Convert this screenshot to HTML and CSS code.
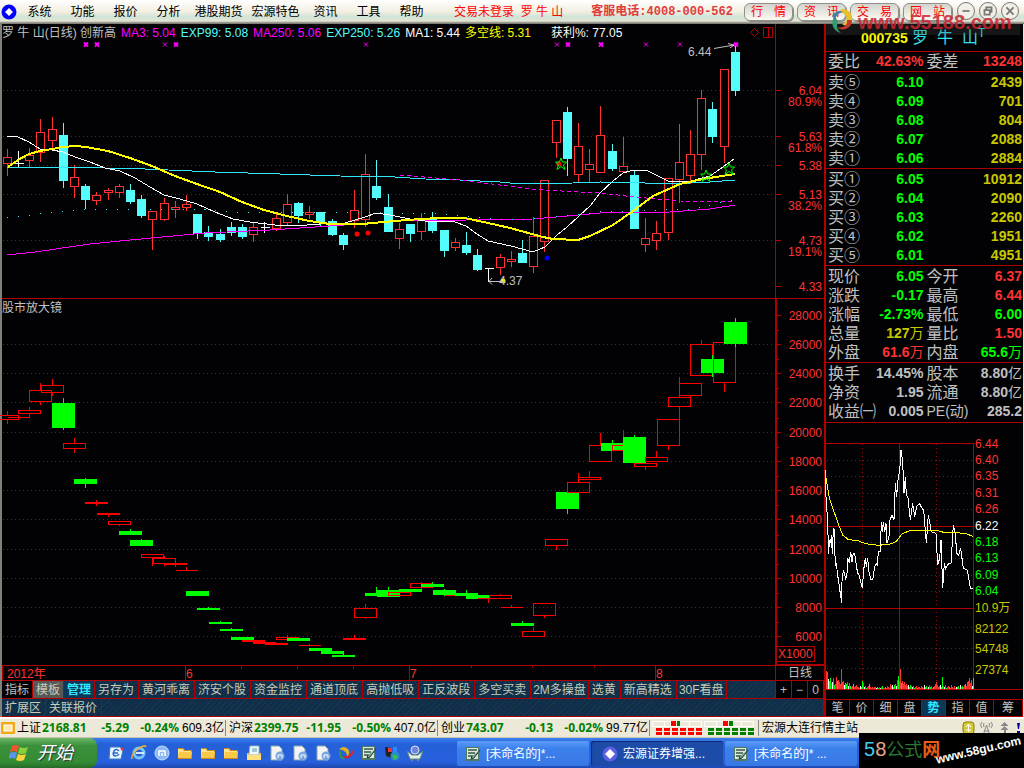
FILE: index.html
```html
<!DOCTYPE html>
<html lang="zh-CN">
<head>
  <meta charset="UTF-8" />
  <meta name="viewport" content="width=device-width, initial-scale=1.0" />
  <title>罗牛山 000735 日线</title>
  <link rel="stylesheet" href="styles.css">
</head>
<body>

  <!-- Icons -->
  <svg class="defs" aria-hidden="true">
    <symbol id="folder" viewBox="0 0 16 16">
      <path d="M1 3h5l2 2h7v9H1z" fill="#c98a1a"/><path d="M1 4h5l1 2h7v7H1z" fill="#ffe58a"/><path d="M2 7h13l-1 6H1z" fill="#fbc94a"/>
    </symbol>
    <symbol id="doc" viewBox="0 0 16 16">
      <path d="M2 1h8l3 3v11H2z" fill="#f4f4f4" stroke="#8aa"/><circle cx="11" cy="11" r="4.5" fill="#7aa6e0"/><path d="M9 13v-3h4v3" stroke="#fff" fill="none"/>
    </symbol>
    <symbol id="notes" viewBox="0 0 16 16">
      <path d="M1 1h13v14H1z" fill="#4f7a66"/><path d="M2 2h11v11H2z" fill="#dfe9d8"/><path d="M3 4h9M3 7h7M3 10h5" stroke="#35584a" stroke-width="1.5"/><path d="M15 4l-6 8-3 1 1-3" fill="#7ea58c" stroke="#234"/>
    </symbol>
    <symbol id="diamond" viewBox="0 0 16 16">
      <circle cx="8" cy="8" r="7.5" fill="#5b5fe0"/><path d="M8 3l5 5-5 5-5-5z" fill="#fff"/>
    </symbol>
  </svg>

  <!-- Menu bar -->
  <header class="menubar">
    <svg class="logo" viewBox="0 0 16 16"><circle cx="8" cy="8" r="7.5" fill="#0000ff"/><path d="M8 4l4 4-4 4-4-4z" fill="#fff"/></svg>
    <nav class="menu">
      <a href="#">系统</a>
      <a href="#">功能</a>
      <a href="#">报价</a>
      <a href="#">分析</a>
      <a href="#" class="wide">港股期货</a>
      <a href="#" class="wide">宏源特色</a>
      <a href="#">资讯</a>
      <a href="#">工具</a>
      <a href="#">帮助</a>
    </nav>
    <span class="login">交易未登录&nbsp; 罗 牛 山</span>
    <span class="hotline">客服电话:4008-000-562</span>
    <div class="pills">
      <button>行 <i>情</i></button>
      <button>资 <i>讯</i></button>
      <button>交 <i>易</i></button>
      <button>网 <i>站</i></button>
    </div>
    <div class="winbtns">
      <button aria-label="最小化"><svg viewBox="0 0 18 18"><path d="M5 9h8"/></svg></button>
      <button aria-label="还原"><svg viewBox="0 0 18 18"><path d="M7 7V5h6v5h-2M5 8h6v5H5z"/></svg></button>
      <button aria-label="关闭"><svg viewBox="0 0 18 18"><path d="M5 5l8 8M13 5l-8 8"/></svg></button>
    </div>
    <div class="mark-top">
      <svg viewBox="0 0 24 26"><path d="M12 1c9 0 13 9 8 14-2 3-6 3-8 1 5-1 6-6 3-9-1-2-4-3-7-3z" fill="#e8c02c"/><path d="M22 12c0 9-10 12-16 7 6 2 12-1 11-7z" fill="#c0392b"/><path d="M5 8c-5 6-3 15 6 17-4-3-5-7-3-11-1-2-2-4-3-6z" fill="#2f9e6e"/><path d="M2 8c3-5 8-6 11-4-4 1-7 3-8 8z" fill="#3f7fa8"/></svg>
      <span>www.55188.com</span>
    </div>
  </header>

  <main>
    <!-- Candle charts -->
    <section class="charts">
      <div class="legend">
        <span class="gray">罗 牛 山(日线) 创新高</span>
        <span class="magenta">MA3: 5.04</span>
        <span class="cyan">EXP99: 5.08</span>
        <span class="magenta">MA250: 5.06</span>
        <span class="cyan">EXP250: 5.26</span>
        <span class="white">MA1: 5.44</span>
        <span class="yellow">多空线: 5.31</span>
        <span class="white profit">获利%: 77.05</span>
        <svg class="tools" viewBox="0 0 24 12"><path d="M4.500 1.500l4 4-4 4-4-4zM13.500 .5h9v10h-9zM18.500 .5v10"/></svg>
        <span class="axis-gap"></span>
      </div>
      <svg id="kline" class="plot" viewBox="2 42 822 256"></svg>
      <div class="legend second">
        <span class="gray">股市放大镜</span>
        <span class="axis-gap thick"></span>
      </div>
      <svg id="lens" class="plot" viewBox="2 316 822 365"></svg>

      <div class="tabs">
        <button class="plain">指标</button>
        <button class="pressed">模板</button>
        <button class="active">管理</button>
        <button>另存为</button>
        <button>黄河乖离</button>
        <button>济安个股</button>
        <button>资金监控</button>
        <button>通道顶底</button>
        <button>高抛低吸</button>
        <button>正反波段</button>
        <button>多空买卖</button>
        <button class="tight">2M多操盘</button>
        <button>选黄</button>
        <button>新高精选</button>
        <button class="tight">30F看盘</button>
        <span class="fill"></span>
        <button class="plain zoom">+</button>
        <button class="plain zoom">−</button>
        <button class="plain zoom">0</button>
      </div>
      <div class="tabs">
        <button>扩展区</button>
        <button>关联报价</button>
        <span class="fill"></span>
      </div>
    </section>

    <!-- Quote panel -->
    <aside class="quote">
      <h1><b>000735</b> 罗&nbsp; 牛&nbsp; 山<sup>T</sup></h1>
      <table class="ratio">
        <tr><th>委比</th><td class="red">42.63%</td><th>委差</th><td class="red">13248</td></tr>
      </table>
      <table>
        <tr><th>卖⑤</th><td class="green">6.10</td><td></td><td class="gold">2439</td></tr>
        <tr><th>卖④</th><td class="green">6.09</td><td></td><td class="gold">701</td></tr>
        <tr><th>卖③</th><td class="green">6.08</td><td></td><td class="gold">804</td></tr>
        <tr><th>卖②</th><td class="green">6.07</td><td></td><td class="gold">2088</td></tr>
        <tr><th>卖①</th><td class="green">6.06</td><td></td><td class="gold">2884</td></tr>
      </table>
      <table>
        <tr><th>买①</th><td class="green">6.05</td><td></td><td class="gold">10912</td></tr>
        <tr><th>买②</th><td class="green">6.04</td><td></td><td class="gold">2090</td></tr>
        <tr><th>买③</th><td class="green">6.03</td><td></td><td class="gold">2260</td></tr>
        <tr><th>买④</th><td class="green">6.02</td><td></td><td class="gold">1951</td></tr>
        <tr><th>买⑤</th><td class="green">6.01</td><td></td><td class="gold">4951</td></tr>
      </table>
      <table>
        <tr><th>现价</th><td class="green">6.05</td><th>今开</th><td class="red">6.37</td></tr>
        <tr><th>涨跌</th><td class="green">-0.17</td><th>最高</th><td class="red">6.44</td></tr>
        <tr><th>涨幅</th><td class="green">-2.73%</td><th>最低</th><td class="green">6.00</td></tr>
        <tr><th>总量</th><td class="gold">127<i>万</i></td><th>量比</th><td class="red">1.50</td></tr>
        <tr><th>外盘</th><td class="red">61.6<i>万</i></td><th>内盘</th><td class="green">65.6<i>万</i></td></tr>
      </table>
      <table class="last">
        <tr><th>换手</th><td>14.45%</td><th>股本</th><td>8.80<i>亿</i></td></tr>
        <tr><th>净资</th><td>1.95</td><th>流通</th><td>8.80<i>亿</i></td></tr>
        <tr><th>收益㈠</th><td>0.005</td><th class="pe">PE(动)</th><td>285.2</td></tr>
      </table>
      <svg id="intraday" class="plot" viewBox="826 423 197 276"></svg>
      <div class="subtabs">
        <button>笔</button>
        <button>价</button>
        <button>细</button>
        <button>盘</button>
        <button class="active">势</button>
        <button>指</button>
        <button>值</button>
        <button>筹</button>
      </div>
    </aside>
  </main>

  <!-- Index ticker -->
  <div class="ticker">
    <svg class="lock" viewBox="0 0 16 14"><rect x="1" y="1" width="14" height="12" fill="#f5a81c"/><rect x="4" y="4" width="8" height="6" fill="#ffe9a8" stroke="#fff"/></svg>
    <div class="index"><span>上证</span><b>2168.81</b><b>-5.29</b><b>-0.24%</b><span>609.3亿</span></div>
    <div class="index"><span>沪深</span><b>2399.75</b><b>-11.95</b><b>-0.50%</b><span>407.0亿</span></div>
    <div class="index"><span>创业</span><b>743.07</b><b>-0.13</b><b>-0.02%</b><span>99.77亿</span></div>
    <svg class="meter" viewBox="0 0 104 18">
      <g fill="none" stroke="#fff"><path d="M.5 2.500h49v5H.5zM12.500 2.500v5M37.500 2.500v5M52.500 2.500h49v5h-49zM64.500 2.500v5M89.500 2.500v5"/></g>
      <path d="M19 2h5v5h-5zM71 2h5v5h-5z" fill="#f00"/><path d="M25 2h3v5h-3zM77 2h4v5h-4z" fill="#008000"/>
      <path d="M4 10.500h47M4 14.500h47" stroke="#f00" stroke-width="3" stroke-dasharray="6 2"/>
      <path d="M56 10.500h46M56 14.500h46" stroke="#008000" stroke-width="3" stroke-dasharray="6 2"/>
    </svg>
    <span class="station">宏源大连行情主站</span>
    <svg class="status" viewBox="0 0 60 14">
      <rect x="1" y="1" width="11" height="12" rx="3" fill="#d8c832" stroke="#8a7d10"/><path d="M6.500 11V4M4 6l2.500-3L9 6M4 9h5" stroke="#fff" fill="none"/>
      <path d="M24.500 4l-3 9M24.500 4l3 9M22 10h5M20 1q-3 3 0 6M29 1q3 3 0 6M22 2q-1 2 0 4M27 2q1 2 0 4" stroke="#888" fill="none"/>
      <path d="M42.500 1l4 4h-8zM42.500 5l4 4h-8zM42 8h2v6h-2z" fill="#888"/><path d="M55 2h3l-1 6h-1zM55 10h3v2h-3z" fill="#0000a0"/>
    </svg>
  </div>

  <!-- Windows task bar -->
  <footer class="taskbar">
    <button class="start">
      <svg viewBox="0 0 20 18"><path d="M3 2q4-2 7 0L8 8q-3-2-7 0z" fill="#f0562c"/><path d="M11 3q4 2 8 0l-2 6q-4 2-8 0z" fill="#8ccf3c"/><path d="M1 9q4-2 7 0l-2 6q-3-2-7 0z" fill="#5a94f0"/><path d="M9 10q4 2 8 0l-2 6q-4 2-8 0z" fill="#fcd33c"/></svg>
      <span>开始</span>
    </button>
    <div class="quick">
      <svg viewBox="0 0 16 16"><path d="M2 2h10l3 3-2 9H1z" fill="#eaf4ff" stroke="#3a78c0"/><path d="M11 6q-3-3-5 0-2 4 1 5 3 0 4-2M6 8h4" stroke="#2468c8" stroke-width="1.500" fill="none"/><circle cx="14" cy="4" r="1.500" fill="#e33"/></svg>
      <svg viewBox="0 0 16 16"><circle cx="8" cy="8" r="5" fill="none" stroke="#7cc4ff" stroke-width="3"/><path d="M5 8h8" stroke="#cfeaff" stroke-width="2"/><path d="M1 14Q0 9 7 4t8-2" stroke="#f0b030" stroke-width="1.500" fill="none"/></svg>
      <svg viewBox="0 0 16 16"><circle cx="8" cy="8" r="7" fill="#8cb8f4" stroke="#c4dcff"/><path d="M5 11V6h6v5M8 11V8" stroke="#fff" stroke-width="1.500" fill="none"/></svg>
      <svg><use href="#folder"/></svg>
      <svg><use href="#folder"/></svg>
      <svg><use href="#folder"/></svg>
      <svg viewBox="0 0 16 16"><path d="M1 8h14v7H1z" fill="#fbc94a"/><path d="M4 1h9v9H3z" fill="#f2f8ff" stroke="#9bb"/><path d="M6 4h5M6 6h5" stroke="#59a"/><path d="M1 10h14v5H1z" fill="#ffe07a"/></svg>
      <svg><use href="#doc"/></svg>
      <svg><use href="#doc"/></svg>
      <svg><use href="#doc"/></svg>
      <svg viewBox="0 0 16 16"><path d="M1 4q5-4 9 0 3 4-1 8 1-6-8-8" fill="#e0b020"/><path d="M15 5q1 6-5 8-4 1-6-2 7 2 11-6" fill="#e02020"/><path d="M3 6q-3 5 3 8" stroke="#2a9a50" stroke-width="2" fill="none"/></svg>
      <svg><use href="#notes"/></svg>
      <svg viewBox="0 0 16 16"><path d="M1 2l7 1v10l-6-2z" fill="#222"/><path d="M4 3h4v4H4z" fill="#e33"/><path d="M9 2h4v5H9z" fill="#38f"/><circle cx="11" cy="11" r="4.500" fill="#2a8ad0"/><path d="M8 11q3-3 6 1l-3 3z" fill="#3cc04a"/></svg>
      <svg viewBox="0 0 16 16"><path d="M0 6l5 4h6l5-4-3 8H3z" fill="#e8eee8" stroke="#587"/><circle cx="8" cy="5" r="4" fill="#6f86dc" stroke="#dde"/><path d="M5 14v2M11 14v2" stroke="#c96"/></svg>
    </div>
    <div class="tasks">
      <button><svg><use href="#notes"/></svg>[未命名的]*...</button>
      <button class="current"><svg><use href="#diamond"/></svg>宏源证券增强...</button>
      <button><svg><use href="#notes"/></svg>[未命名的]* ...</button>
    </div>
    <div class="mark-bottom">
      <span class="name"><i class="c1">5</i><i class="c2">8</i><i class="c3">公式</i><i class="c4">网</i></span>
      <span class="site">www.58gu.com</span>
    </div>
  </footer>

  <script src="script.js"></script>
</body>
</html>
```
FILE: styles.css
```css
* {
  box-sizing: border-box;
}
body {
  margin: 0;
  min-height: 100vh;
  display: flex;
  flex-direction: column;
  background: #000;
  font: 12px/16px "Liberation Sans", "Noto Sans CJK SC", sans-serif;
}
button {
  font: inherit;
  padding: 0;
  border: 0;
  cursor: pointer;
}
i {
  font-style: normal;
}
.defs {
  position: absolute;
  width: 0;
  height: 0;
}
.gray { color: #c0c0c0; }
.white { color: #fff; }
.magenta { color: #ff00ff; }
.cyan { color: #54fcfc; }
.yellow { color: #ffff00; }

/* menu bar */
.menubar {
  position: relative;
  display: flex;
  align-items: center;
  height: 24px;
  background: linear-gradient(#fff, #f2eee0 50%, #cfe4d8 70%, #e4e4d4 88%, #808078 96%);
}
.logo {
  width: 16px;
  height: 16px;
  margin: 0 1px;
}
.menu {
  display: flex;
}
.menu a {
  width: 43px;
  text-align: center;
  color: #000;
  text-decoration: none;
}
.menu a.wide {
  width: 57px;
}
.login {
  margin-left: 21px;
  color: #f00;
  white-space: nowrap;
}
.hotline {
  margin-left: 28px;
  font: bold 12px/16px "Liberation Mono", "Noto Sans CJK SC", monospace;
  color: #e03c3c;
  white-space: nowrap;
}
.pills, .winbtns {
  display: flex;
  gap: 4px;
}
.pills {
  margin-left: auto;
}
.pills button {
  display: flex;
  justify-content: space-between;
  width: 49px;
  height: 18px;
  padding: 0 6px;
  border: 1px solid #909088;
  border-radius: 6px;
  background: linear-gradient(#d4d4d0, #fbfaf2);
  box-shadow: 1px 1px 0 #888;
  color: #f00;
}
.winbtns {
  margin: 0 5px 2px 5px;
}
.winbtns button {
  width: 18px;
  height: 18px;
  border: 1px solid #777;
  border-radius: 50%;
  background: #f2f0e6;
}
.winbtns svg {
  display: block;
  width: 16px;
  height: 16px;
  fill: none;
  stroke: #777;
  stroke-width: 2;
}
.mark-top {
  position: absolute;
  right: 4px;
  top: 7px;
  z-index: 2;
  display: flex;
  align-items: center;
  gap: 4px;
  width: 194px;
  padding-left: 4px;
  height: 28px;
  pointer-events: none;
  background: linear-gradient(transparent 17px, rgba(80, 80, 80, .25) 17px);
  color: rgba(205, 36, 48, .85);
  font: bold 20px/28px "Liberation Sans", sans-serif;
}
.mark-top svg {
  width: 24px;
  height: 28px;
}
.mark-top span {
  padding-top: 2px;
}

/* main area */
main {
  flex: 1;
  display: grid;
  grid-template-columns: 1fr 200px;
  background: #020204;
}
.charts {
  min-width: 0;
  border-left: 2px solid #808078;
}
.plot {
  display: block;
  width: 100%;
  overflow: visible;
  font-size: 12px;
}
.legend {
  display: flex;
  align-items: center;
  gap: 5px;
  height: 18px;
  white-space: nowrap;
}
.legend.second {
  border-top: 1px solid #b00000;
}
.legend .profit {
  margin-left: 15px;
}
.tools {
  width: 24px;
  height: 12px;
  margin-left: auto;
  margin-right: -4px;
  fill: none;
  stroke: #b00000;
}
.axis-gap {
  width: 49px;
  align-self: stretch;
  border-left: 1px solid #b00000;
}
.axis-gap.thick {
  margin-left: auto;
  border-left-width: 2px;
}
.tabs, .subtabs {
  display: flex;
  border-bottom: 1px solid #b00000;
  background-color: #122a4c;
  background-image: repeating-linear-gradient(45deg, #10324a 0 1px, transparent 1px 3px), repeating-linear-gradient(-45deg, #143c44 0 1px, transparent 1px 4px);
}
.tabs button {
  height: 17px;
  padding: 0 4px 0 3px;
  border-right: 1px solid #b00000;
  background: transparent;
  color: #c8ccb8;
  white-space: nowrap;
  line-height: 16px;
}
.tabs .plain, .subtabs button {
  background: #020204;
  color: #c0c0c0;
}
.tabs .plain, .tabs .pressed, .tabs .active {
  padding: 0 3px;
}
.tabs .tight {
  padding: 0 2px;
}
.tabs .pressed {
  background: #585858;
}
.tabs .active, .subtabs .active {
  background: #0c3858;
  color: #30e8ff;
  font-weight: bold;
}
.tabs .fill {
  flex: 1;
  border-right: 1px solid #b00000;
}
.tabs .zoom {
  width: 16px;
}
.subtabs button {
  width: 24px;
  height: 16px;
  border-right: 1px solid #b00000;
}
.subtabs button:last-child {
  flex: 1;
}

/* quote panel */
.quote {
  display: flex;
  flex-direction: column;
  border-left: 2px solid #b00000;
  border-right: 1px solid #e8e4d8;
}
.quote h1 {
  height: 28px;
  margin: 0;
  padding: 4px 0 0 35px;
  border-bottom: 1px solid #b00000;
  font-weight: normal;
  font-size: 16px;
  line-height: 20px;
  white-space: nowrap;
  color: #30e0f0;
}
.quote h1 b {
  font-size: 14px;
  color: #ffff00;
}
.quote sup {
  font-size: 12px;
  line-height: 0;
}
.quote table {
  width: 100%;
  table-layout: fixed;
  border-collapse: separate;
  border-spacing: 0;
  padding-top: 1px;
  border-bottom: 1px solid #b00000;
  color: #c0c0c0;
}
.quote .ratio {
  padding-top: 0;
}
.quote .last {
  padding-bottom: 1px;
}
.quote th, .quote td {
  height: 19px;
  padding: 0;
  line-height: 19px;
  white-space: nowrap;
}
.quote th {
  padding-left: 2px;
  text-align: left;
  font-weight: normal;
  font-size: 16px;
}
.quote td {
  padding-right: 1px;
  text-align: right;
  font-weight: bold;
  font-size: 14px;
}
.quote td i {
  font-weight: normal;
}
.quote .pe {
  font-size: 14px;
}
.quote .green { color: #00ff00; }
.quote .red { color: #ff3232; }
.quote .gold { color: #c8c800; }
.subtabs {
  margin-top: auto;
  border-top: 1px solid #b00000;
}

/* svg parts */
.line { fill: none; stroke: #b00000; }
.dots { fill: none; stroke: #b00000; stroke-dasharray: 1 3; }
.up { fill: #020204; stroke: #ff3232; }
.down { fill: #54fcfc; stroke: #54fcfc; }
.flat { stroke: #fff; }
.lens-up { fill: none; stroke: #ff0000; }
.lens-down { fill: #00ff00; stroke: #00ff00; }
.scale { fill: #ff3232; }
.crisp { shape-rendering: crispEdges; }
.curve { fill: none; }

/* index ticker */
.ticker {
  display: flex;
  align-items: center;
  height: 21px;
  border-top: 2px solid #fff;
  border-bottom: 1px solid #c8c4b0;
  background: #ece9d8;
  color: #000;
  white-space: nowrap;
}
.lock {
  width: 16px;
  height: 14px;
}
.index {
  display: grid;
  grid-template-columns: 25px 48px 39px 50px 45px;
  padding-left: 1px;
  padding-right: 1px;
  margin-right: 2px;
  border-right: 1px solid #888;
  text-align: right;
}
.index b {
  font-family: "Open Sans", sans-serif;
  color: #008000;
}
.index b:nth-child(2), .index span:first-child {
  text-align: left;
}
.meter {
  width: 104px;
  height: 18px;
}
.station {
  flex: 1;
  margin-left: 2px;
  padding-left: 3px;
  border-left: 1px solid #888;
}
.status {
  width: 60px;
  height: 14px;
  margin-right: 2px;
}

/* task bar */
.taskbar {
  position: relative;
  display: flex;
  height: 30px;
  background: linear-gradient(#3c80f0, #2460d8 20%, #2860dc 80%, #1c48b0);
}
.start {
  display: flex;
  align-items: center;
  gap: 8px;
  width: 97px;
  padding-left: 9px;
  border-radius: 0 8px 8px 0;
  background: linear-gradient(#6cb868, #3c903c 25%, #348c34 80%, #246c28);
  color: #fff;
  font-size: 18px;
  font-style: italic;
  text-shadow: 1px 1px 1px #234;
}
.start svg {
  width: 20px;
  height: 18px;
}
.quick {
  display: flex;
  align-items: center;
  gap: 7px;
  margin-left: 11px;
}
.quick svg, .tasks svg {
  width: 16px;
  height: 16px;
}
.tasks {
  display: flex;
  gap: 2px;
  margin: 3px 0 2px 34px;
}
.tasks button {
  display: flex;
  align-items: center;
  gap: 5px;
  width: 132px;
  padding-left: 8px;
  border-radius: 2px;
  background: linear-gradient(#5c9cf8, #3c80ec 30%, #3878e4);
  color: #fff;
  white-space: nowrap;
}
.tasks .current {
  padding-left: 11px;
  background: #1c4ca8;
  box-shadow: inset 1px 1px 1px #0c2c70;
}
.mark-bottom {
  position: absolute;
  right: 0;
  bottom: 0;
  width: 165px;
  height: 35px;
  background: #000;
}
.name {
  position: absolute;
  left: 5px;
  top: 3px;
  font-size: 18px;
  line-height: 26px;
}
.c1 { color: #48c8f0; font-size: 20px; }
.c2 { color: #e8a888; font-size: 20px; }
.c3 { color: #287838; }
.c4 { color: #e85c18; font-weight: bold; }
.site {
  position: absolute;
  right: 2px;
  bottom: 10px;
  transform: rotate(-13deg);
  color: #fff;
  font: bold 12px/16px "Liberation Sans", sans-serif;
}
```
FILE: script.js
```js
const NS = 'http://www.w3.org/2000/svg';

function add(svg, tag, attrs, text) {
  const el = document.createElementNS(NS, tag);
  for (const key in attrs) el.setAttribute(key, attrs[key]);
  if (text) el.textContent = text;
  svg.appendChild(el);
  return el;
}

// [direction, high, body top, body bottom, low]
const daily = [
  ['r',149,157,163,175],['w',151,163,163,167],['r',148,155,160,167],['r',119,132,152,161],['r',117,129,140,148],
  ['c',123,135,180,187],['r',165,177,186,197],['c',184,186,199,208],['r',192,195,200,204],['r',188,190,192,199],
  ['r',184,186,192,197],['c',184,190,201,203],['c',195,199,215,217],['r',211,211,219,249],['r',198,203,219,220],
  ['r',201,207,209,217],['r',195,204,207,210],['c',214,214,233,238],['c',226,232,236,240],['c',229,234,239,241],
  ['c',222,227,232,235],['c',224,227,236,238],['r',223,227,234,241],['w',222,227,227,233],['r',214,218,228,230],
  ['r',194,204,222,224],['c',202,203,215,222],['r',206,212,214,218],['c',212,212,222,226],['c',219,221,234,235],
  ['c',233,235,244,249],['r',190,210,220,227],['r',154,174,219,226],['c',160,186,197,199],['c',194,207,231,231],
  ['r',223,229,238,248],['c',224,224,233,241],['r',213,218,231,239],['c',212,219,230,232],['c',230,230,250,256],
  ['r',238,242,247,250],['c',232,245,252,254],['c',249,255,269,270],['w',268,268,268,282],['r',254,257,267,274],
  ['r',251,259,261,266],['c',240,253,262,262],['r',217,236,266,272],['r',180,180,241,251],['r',120,120,142,157],
  ['c',107,112,158,175],['r',123,146,174,181],['r',149,164,169,181],['r',106,135,172,172],['c',144,151,168,170],
  ['r',137,166,171,171],['c',171,175,228,228],['r',218,238,244,251],['r',221,233,240,249],['r',178,178,232,239],
  ['r',124,162,179,202],['r',130,154,175,183],['r',90,98,154,169],['c',102,109,136,142],['r',69,69,146,162],
  ['c',46,52,90,95]
];
const magnified = [
  ['r',411,415,419,423],['r',417,417,417,417],['r',407,410,413,416],['r',383,390,401,404],['r',379,385,392,395],
  ['g',398,403,427,429],['r',438,443,448,452],['g',478,479,483,487],['r',500,502,503,505],['r',513,513,514,516],
  ['r',521,521,524,525],['g',529,531,534,534],['g',539,540,545,545],['r',554,554,557,565],['r',556,558,563,565],
  ['r',563,563,564,566],['r',567,570,570,570],['g',591,591,595,595],['g',607,608,609,609],['g',621,622,623,623],
  ['g',628,629,630,630],['g',637,637,639,639],['r',640,640,641,641],['r',642,642,643,643],['r',643,643,644,644],
  ['r',635,637,639,639],['g',638,638,640,640],['r',644,645,645,645],['g',648,648,650,650],['g',651,651,653,653],
  ['g',654,655,656,656],['r',635,638,639,639],['r',604,608,617,618],['g',587,593,595,595],['g',587,590,596,596],
  ['r',592,592,595,595],['g',589,589,591,591],['r',582,583,587,588],['g',582,584,586,586],['g',589,590,594,595],
  ['r',595,595,595,595],['g',590,593,595,595],['g',595,595,598,598],['r',598,598,598,602],['r',594,595,598,598],
  ['r',605,607,607,607],['g',621,623,625,625],['r',627,631,636,636],['r',603,603,615,617],['r',539,539,545,549],
  ['g',490,492,508,513],['r',473,482,492,492],['r',471,477,479,479],['r',433,445,461,461],['g',440,443,450,450],
  ['r',430,445,450,450],['g',435,437,462,462],['r',463,463,466,469],['r',451,457,461,461],['r',419,419,445,449],
  ['r',377,397,406,418],['r',383,383,395,397],['r',340,344,375,375],['g',355,359,372,376],['r',342,342,382,391],
  ['g',318,322,343,346]
];

// column centre of day i
const dayX = i => Math.floor(7.3 + 11.2 * i) + .5;

function candles(svg, data, half, classes) {
  data.forEach(([dir, high, top, bottom, low], i) => {
    const x = dayX(i), cls = classes[dir] + ' crisp';
    if (dir === 'w') {
      add(svg, 'path', { class: cls, d: `M${x} ${high}V${low}M${x - half} ${top + .5}h${half * 2 + 1}` });
      return;
    }
    add(svg, 'path', { class: cls, d: `M${x} ${high}V${top + .5}M${x} ${bottom + .5}V${low + 1}` });
    add(svg, 'path', { class: cls, d: `M${x - half} ${top + .5}h${half * 2}V${bottom + .5}h${-half * 2}z` });
  });
}

function curve(svg, points, color, width, dash) {
  const attrs = { class: 'curve crisp', points, stroke: color, 'stroke-width': width };
  if (dash) attrs['stroke-dasharray'] = dash;
  add(svg, 'polyline', attrs);
}

// Daily chart
const kline = document.getElementById('kline');
[90, 136, 165, 194, 240].forEach(y => add(kline, 'path', { class: 'dots crisp', d: `M3 ${y}.5H775` }));
add(kline, 'path', { class: 'line crisp', d: 'M775.5 42V298M776 90.5h5M776 136.5h5M776 165.5h5M776 194.5h5M776 240.5h5M776 286.5h5' });
candles(kline, daily, 4, { r: 'up', c: 'down', w: 'flat' });
curve(kline, '7,168 63,167 105,168 145,169 215,172 280,174 340,176 395,177 425,179 460,180 500,182 520,184 573,183 600,182 645,183 690,183 710,182 735,180', '#30e8f8', 1);
curve(kline, '7,255 35,252 90,244 130,240 205,233 270,230 330,226 400,221 533,219 556,217 600,213 670,212 710,209 735,205', '#ff00ff', 1);
curve(kline, '400,175 460,180 500,185 530,189 578,192 600,193 635,197 680,201 735,202', '#ff00ff', 1, '4 3');
curve(kline, '7,218 40,214 75,210 130,209 197,209 231,212 399,213 444,214 500,219 533,219 600,212 690,209 735,200', '#30e8f8', 1, '1 10');
curve(kline, '7,136 18,137 29,142 40,149 52,150 63,152 75,157 90,162 105,168 120,171 135,178 150,187 164,195 180,199 197,204 215,212 233,219 250,222 275,225 295,226 320,224 345,223 365,217 376,213 390,215 410,219 425,221 455,222 466,226 477,234 488,241 511,246 533,252 545,247 557,235 567,227 590,206 600,193 613,181 623,173 630,171 646,170 668,181 687,182 710,176 720,169 734,159', '#fff', 1);
curve(kline, '8,167 18,160 29,154 40,151 52,149 63,147 75,146 86,147 108,151 130,158 152,166 175,176 197,184 220,192 242,202 264,210 287,216 309,221 330,224 362,224 395,221 421,219 440,218 465,218 488,223 510,228 543,237 553,239 578,240 590,236 613,225 633,211 653,196 680,184 703,179 735,174', '#ffff00', 2);

[86, 97, 165, 176, 366, 557, 568, 601, 646, 680, 736].forEach(x => {
  add(kline, 'path', { d: `M${x - 2} 42.500l4 4m0-4l-4 4`, stroke: '#ff00ff', 'stroke-width': [165, 366, 557, 646, 680].includes(x) ? 1 : 2 });
});
[[357, 234, '#f00'], [368, 233, '#f00'], [559, 164, '#f00'], [547, 258, '#00f'], [503, 281, '#ffff00']].forEach(([cx, cy, fill]) => {
  add(kline, 'circle', { cx, cy, r: 2.5, fill });
});
[[561, 164], [706, 176], [729, 169]].forEach(([x, y]) => {
  add(kline, 'path', { d: `M${x} ${y - 6}l1.500 4h4l-3 3 1.500 4.500-4-3-4 3 1.500-4.500-3-3h4z`, fill: 'none', stroke: '#00ff00' });
});
add(kline, 'path', { d: 'M714 48.500L734 45M728 43.500l6 1.500-4 3M489 281.500h14M492 278l-3 3.500 3 3', fill: 'none', stroke: '#c0c0c0' });
add(kline, 'text', { x: 688, y: 56, fill: '#c0c0c0' }, '6.44');
add(kline, 'text', { x: 499, y: 285, fill: '#c0c0c0' }, '4.37');
[['6.04', 95], ['80.9%', 106], ['5.63', 141], ['61.8%', 152], ['5.38', 170], ['5.13', 199], ['38.2%', 210], ['4.73', 245], ['19.1%', 256], ['4.33', 291]].forEach(([t, y]) => {
  add(kline, 'text', { x: 822, y, class: 'scale', 'text-anchor': 'end' }, t);
});

// Magnifier chart
const lens = document.getElementById('lens');
[344, 373, 402, 432, 461, 490, 519, 549, 578, 607, 636].forEach((y, i) => {
  add(lens, 'path', { class: 'dots crisp', d: `M3 ${y}.5H775` });
  add(lens, 'path', { class: 'line crisp', d: `M777 ${y}.5h4M777 ${y - 14}.5h2` });
  add(lens, 'text', { x: 822, y: y + 5, class: 'scale', 'text-anchor': 'end' }, String(26000 - i * 2000));
});
add(lens, 'text', { x: 822, y: 320, class: 'scale', 'text-anchor': 'end' }, '28000');
candles(lens, magnified, 11, { r: 'lens-up', g: 'lens-down' });
add(lens, 'path', { class: 'line crisp', 'stroke-width': 2, d: 'M776 316V665H824' });
add(lens, 'path', { class: 'line crisp', d: 'M777 315.5h4M777 646.5h37v15h-37M2 665.5H776M2 680.5H824M2.5 665V681M185.5 665v16M409.5 665v16M655.5 665v16M775.5 665v16M241.5 665v4M297.5 665v4M353.5 665v4M471.5 665v3M532.5 665v3M594.5 665v3' });
[['X1000', 778, 658], ['2012年', 7, 678], ['6', 186, 678], ['7', 410, 678], ['8', 656, 678]].forEach(([t, x, y]) => {
  add(lens, 'text', { x, y, class: 'scale' }, t);
});
add(lens, 'text', { x: 788, y: 677, fill: '#c0c0c0' }, '日线');

// Intraday chart
const intraday = document.getElementById('intraday');
[460, 476, 493, 509, 542, 558, 575, 591, 627, 648, 668].forEach(y => add(intraday, 'path', { class: 'dots crisp', d: `M827 ${y}.5H973` }));
add(intraday, 'path', { class: 'dots crisp', d: 'M862.5 444V689M936.5 444V689' });
add(intraday, 'path', { class: 'line crisp', d: 'M826 443.5H973.5V689M899.5 443V689M826 526.5H973M826 608.5H973M826 689.5H1023' });

// minute volume, one column each
const volume = [18,17,10,8,11,6,7,11,4,5,12,8,9,7,5,20,7,8,4,6,5,7,3,6,3,2,3,5,2,3,4,2,2,1,3,2,8,6,2,3,1,2,3,5,2,1,2,1,2,2,1,2,1,2,1,2,3,1,1,2,1,3,2,1,5,3,4,2,4,5,3,9,13,8,20,6,8,5,7,4,5,3,4,2,4,3,2,3,1,2,3,1,2,2,1,3,2,1,4,2,3,1,2,4,2,3,1,2,3,5,7,4,2,3,4,2,12,3,2,4,1,2,3,2,1,4,2,1,3,1,2,2,3,1,4,2,3,2,4,5,3,7,8,11,6,9,3,11];
const mix = 'rgrwgrgrrgwgrrgggrrrggrwrwrg';
const tints = { r: '#ff3232', g: '#00ff00', w: '#ffffff' };
volume.forEach((h, i) => {
  add(intraday, 'rect', { class: 'crisp', x: 826 + i, y: 689 - h, width: 1, height: h, fill: tints[mix[(i * 5 + (i >> 2)) % mix.length]] });
});
// tick points are stored three to a pixel
const ticks = '10,150 12,230 16,290 18,345 20,403 22,360 26,370 28,345 31,403 33,350 36,325 38,380 40,435 44,430 46,465 50,480 53,515 56,515 58,550 60,485 64,450 68,460 71,480 75,460 77,415 82,430 86,395 90,425 94,400 98,400 102,430 107,460 110,460 117,490 121,505 125,450 130,415 133,440 137,415 141,455 146,478 152,480 158,440 163,430 166,435 169,395 175,395 178,305 181,335 184,305 188,335 192,310 195,370 201,350 204,300 210,285 216,300 220,190 224,230 229,170 233,155 237,90 242,125 246,220 250,170 253,225 258,235 265,300 272,250 278,290 284,260 292,250 300,265 305,270 313,370 319,285 328,335 342,340 347,435 353,415 357,360 362,505 367,430 371,445 380,430 387,430 394,315 400,340 404,400 410,405 416,385 424,445 436,450 445,505 453,506';
const average = '10,160 22,235 36,275 50,315 62,345 78,358 110,363 130,371 170,376 205,372 222,365 240,342 260,333 290,331 345,331 365,337 400,337 435,342 453,349';
const toPixels = list => list.split(' ').map(p => {
  const [x, y] = p.split(',');
  return `${822 + x / 3},${420 + y / 3}`;
}).join(' ');
curve(intraday, toPixels(ticks), '#fff', 1);
curve(intraday, toPixels(average), '#ffff00', 1);
[['6.44', 448, '#ff3232'], ['6.40', 464, '#ff3232'], ['6.35', 480, '#ff3232'], ['6.31', 497, '#ff3232'], ['6.26', 513, '#ff3232'],
 ['6.22', 530, '#fff'], ['6.18', 546, '#00ff00'], ['6.13', 562, '#00ff00'], ['6.09', 579, '#00ff00'], ['6.04', 595, '#00ff00'],
 ['10.9万', 612, '#c8c800'], ['82122', 633, '#c8c800'], ['54748', 653, '#c8c800'], ['27374', 674, '#c8c800']].forEach(([t, y, fill]) => {
  add(intraday, 'text', { x: 975, y, fill }, t);
});
```
